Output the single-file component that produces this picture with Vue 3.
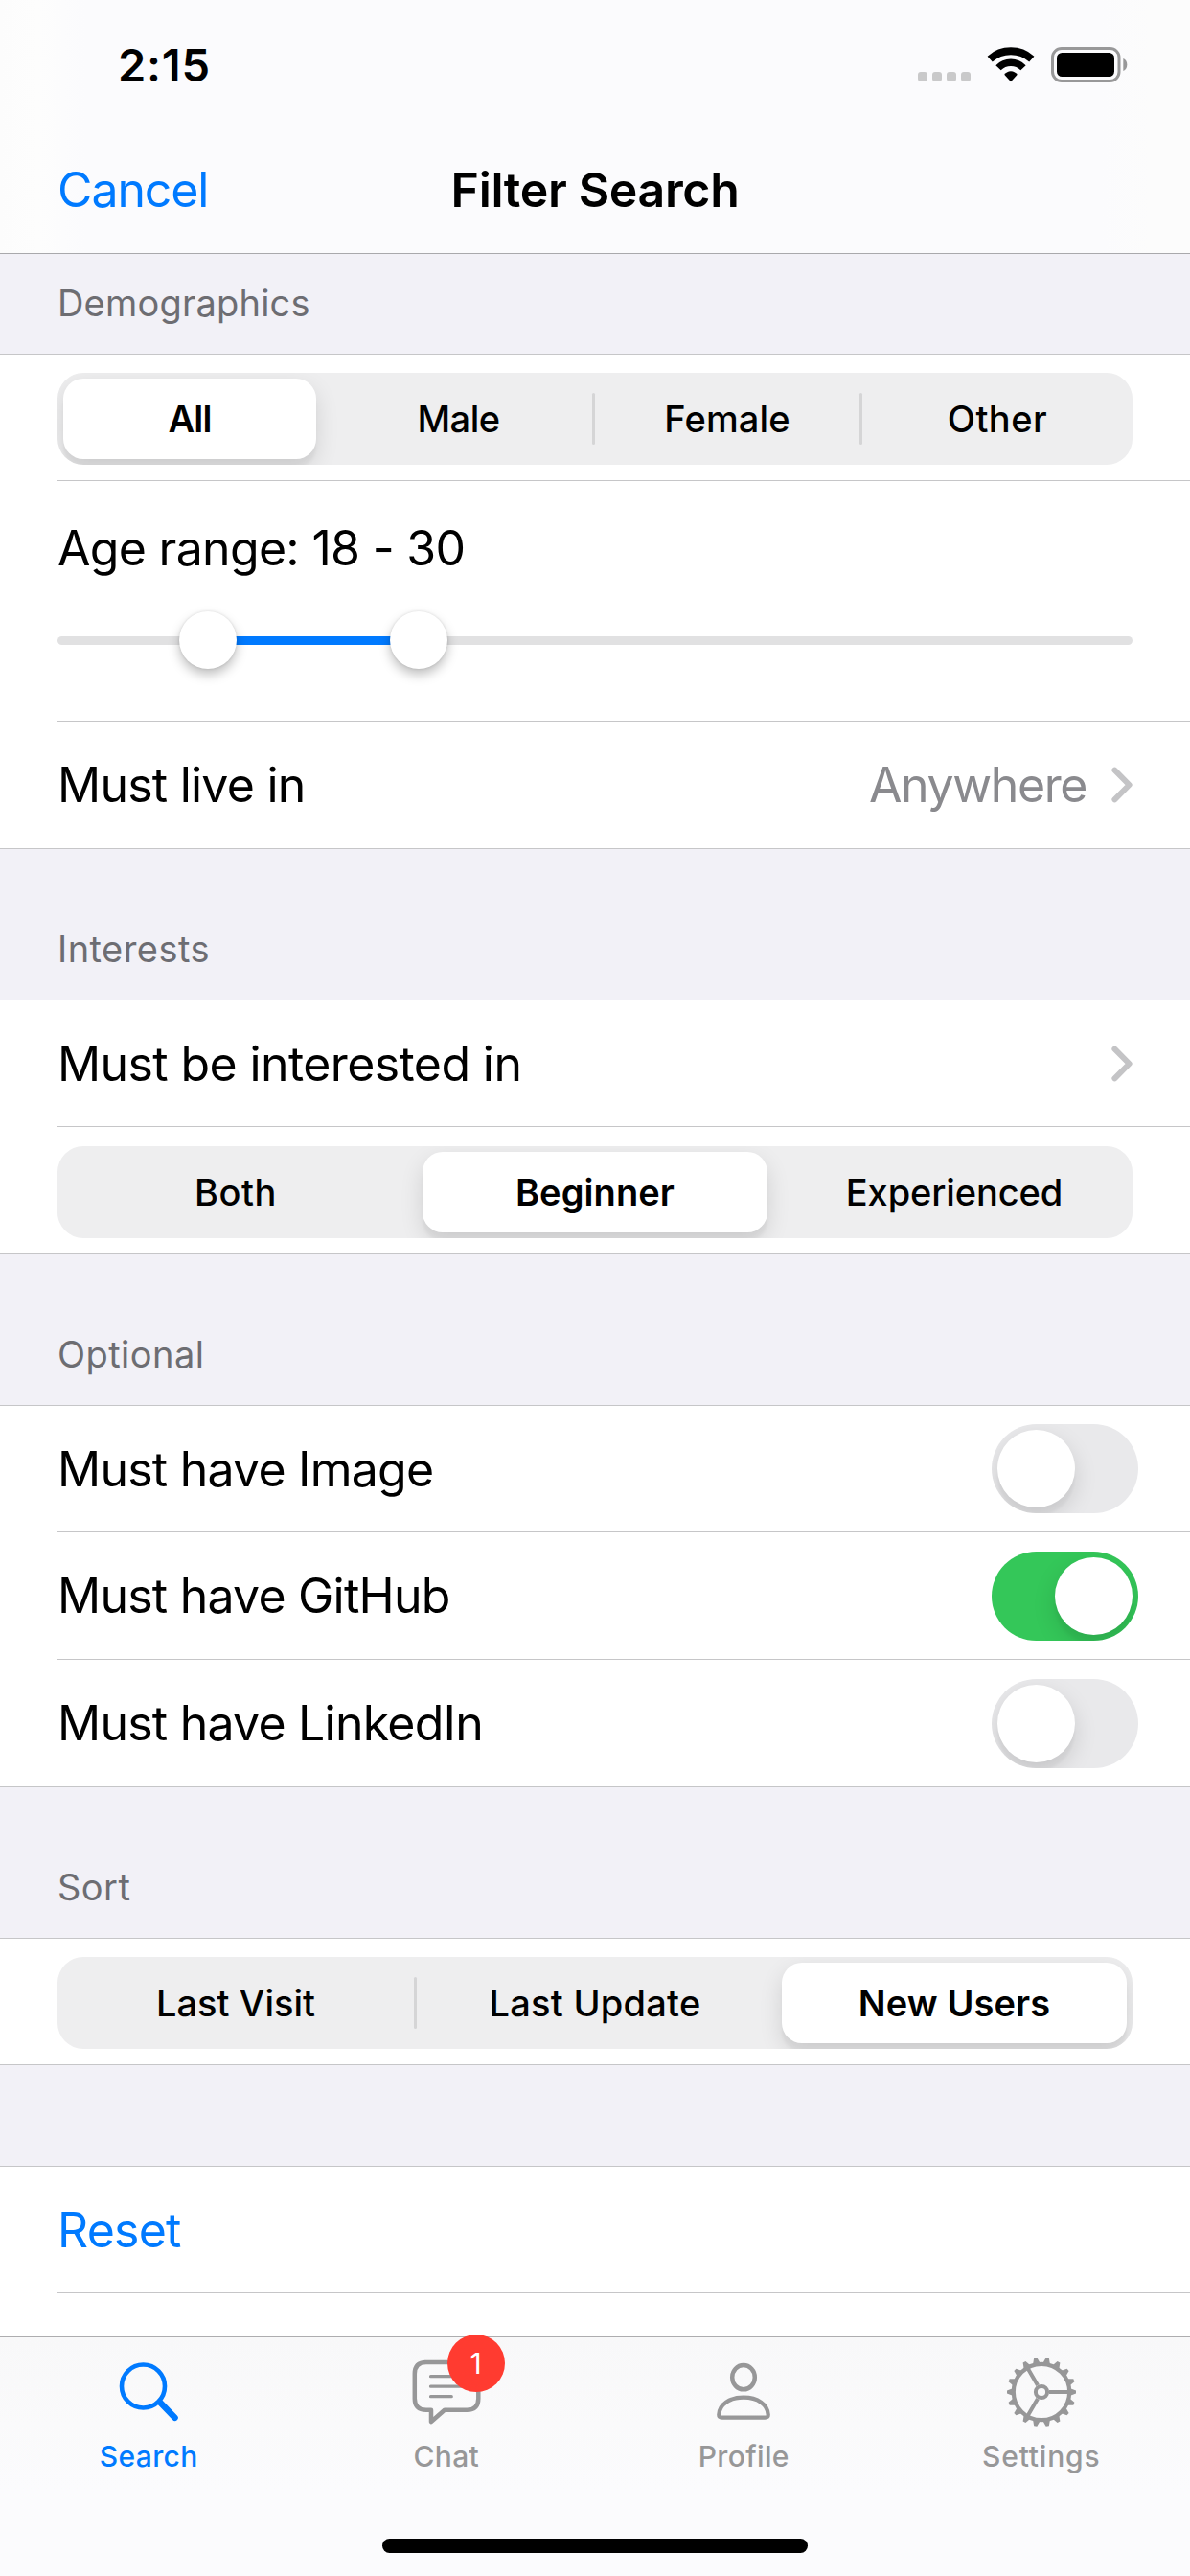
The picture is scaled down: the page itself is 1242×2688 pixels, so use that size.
<script setup>
import { ref } from 'vue'

const gender = ref({
  options: [
    { label: 'All', width: 276, tracking: -0.8 },
    { label: 'Male', width: 279, tracking: -0.5 },
    { label: 'Female', width: 276, tracking: 0.15 },
    { label: 'Other', width: 282, tracking: 0.5 },
  ],
  selected: 0,
})
const level = ref({
  options: [
    { label: 'Both', width: 372, tracking: 0.6 },
    { label: 'Beginner', width: 372, tracking: 0.1 },
    { label: 'Experienced', width: 372, tracking: -0.1 },
  ],
  selected: 1,
})
const sort = ref({
  options: [
    { label: 'Last Visit', width: 372 },
    { label: 'Last Update', width: 372, tracking: 0.25 },
    { label: 'New Users', width: 372, tracking: 0.1 },
  ],
  selected: 2,
})
const toggles = ref([
  { label: 'Must have Image', on: false, height: 132 },
  { label: 'Must have GitHub', on: true, height: 133 },
  { label: 'Must have LinkedIn', on: false, height: 133 },
])

// A divider is only drawn between two options that are both unselected.
const hasDivider = (control, i) => i > 0 && control.selected !== i && control.selected !== i - 1

const teeth = Array.from({ length: 18 }, (_, i) => i * 20)
</script>

<template>
  <div class="screen">
    <header class="top">
      <div class="status">
        <span class="time">2:15</span>
        <div class="indicators">
          <span class="dots"><i v-for="n in 4" :key="n"></i></span>
          <svg class="wifi" width="50" height="37" viewBox="0 0 50 37">
            <g fill="none" stroke="#000">
              <path d="M3.200 12.600A32.700 32.700 0 0 1 46.800 12.600" stroke-width="7.800" />
              <path d="M12 21.800A18 18 0 0 1 38 21.800" stroke-width="7.400" />
            </g>
            <path d="M25 36.300L18.200 28.800Q21 25.200 25 25.200T31.800 28.800Z" />
          </svg>
          <svg class="battery" width="81" height="37" viewBox="0 0 81 37">
            <rect x="1.500" y="1.500" width="69.500" height="34" rx="9.500" fill="none" stroke="#989899" stroke-width="3" />
            <rect x="6" y="6" width="60" height="25" rx="5.500" />
            <path d="M75.300 12q4 1.800 4 6.500t-4 6.500z" fill="#989899" />
          </svg>
        </div>
      </div>
      <nav class="nav">
        <a class="cancel">Cancel</a>
        <h1>Filter Search</h1>
      </nav>
    </header>

    <main>
      <h2 class="section first">Demographics</h2>
      <div class="row control h132">
        <div class="segmented">
          <template v-for="(o, i) in gender.options" :key="o.label">
            <span v-if="i" class="gap" :class="{ line: hasDivider(gender, i) }"></span>
            <span class="seg" :class="{ on: i === gender.selected }" :style="{ width: o.width + 'px', letterSpacing: (o.tracking || 0) + 'px' }"><span>{{ o.label }}</span></span>
          </template>
        </div>
      </div>
      <div class="row age">
        <span class="label">Age range: 18 - 30</span>
        <div class="slider">
          <div class="track"></div>
          <div class="range"></div>
          <i class="thumb low"></i>
          <i class="thumb high"></i>
        </div>
      </div>
      <div class="row last h133">
        <span class="label">Must live in</span>
        <span class="value">Anywhere</span>
        <svg class="chevron" width="22" height="38" viewBox="0 0 22 38"><path d="M3.400 3.700L18.600 19L3.400 34.300" /></svg>
      </div>

      <h2 class="section">Interests</h2>
      <div class="row h132">
        <span class="label interested">Must be interested in</span>
        <svg class="chevron" width="22" height="38" viewBox="0 0 22 38"><path d="M3.400 3.700L18.600 19L3.400 34.300" /></svg>
      </div>
      <div class="row control last h133">
        <div class="segmented">
          <template v-for="(o, i) in level.options" :key="o.label">
            <span v-if="i" class="gap" :class="{ line: hasDivider(level, i) }"></span>
            <span class="seg" :class="{ on: i === level.selected }" :style="{ width: o.width + 'px', letterSpacing: (o.tracking || 0) + 'px' }"><span>{{ o.label }}</span></span>
          </template>
        </div>
      </div>

      <h2 class="section">Optional</h2>
      <div
        v-for="(t, i) in toggles"
        :key="t.label"
        class="row toggle"
        :class="['h' + t.height, { last: i === toggles.length - 1 }]"
      >
        <span class="label">{{ t.label }}</span>
        <span class="switch" :class="{ on: t.on }"><i></i></span>
      </div>

      <h2 class="section">Sort</h2>
      <div class="row control last h132">
        <div class="segmented">
          <template v-for="(o, i) in sort.options" :key="o.label">
            <span v-if="i" class="gap" :class="{ line: hasDivider(sort, i) }"></span>
            <span class="seg" :class="{ on: i === sort.selected }" :style="{ width: o.width + 'px', letterSpacing: (o.tracking || 0) + 'px' }"><span>{{ o.label }}</span></span>
          </template>
        </div>
      </div>

      <div class="spacer"></div>
      <div class="row h132">
        <a class="label link">Reset</a>
      </div>
    </main>

    <footer class="tabbar">
      <div class="tabs">
        <a class="tab active">
          <svg width="80" height="80" viewBox="0 0 80 80" fill="none" stroke="currentColor">
            <circle cx="34.500" cy="34" r="22.500" stroke-width="4.600" />
            <path d="M51.800 50.500L67.500 66.800" stroke-width="6.600" stroke-linecap="round" />
          </svg>
          <span>Search</span>
        </a>
        <a class="tab">
          <svg width="80" height="80" viewBox="0 0 80 80" fill="none" stroke="currentColor" stroke-linejoin="round" stroke-linecap="round">
            <path d="M17.300 9H61.300Q73.300 9 73.300 21V46.700Q73.300 58.700 61.300 58.700H38L24 71V58.700H18.800Q6.800 58.700 6.800 46.700V21Q6.800 9 18.800 9Z" stroke-width="4.500" />
            <path d="M23.500 23.700H56M23.500 34.200H56M23.500 44.700H45.300" stroke-width="3.200" />
          </svg>
          <b class="badge">1</b>
          <span>Chat</span>
        </a>
        <a class="tab">
          <svg width="80" height="80" viewBox="0 0 80 80" fill="none" stroke="currentColor">
            <ellipse cx="40" cy="24.700" rx="11.800" ry="12.600" stroke-width="4.500" />
            <path d="M17.600 66.700C15 66.700 14.200 65.600 14.300 63.500C14.800 53 25 45.700 40 45.700S65.200 53 65.700 63.500C65.800 65.600 65 66.700 62.400 66.700Z" stroke-width="4.300" />
          </svg>
          <span>Profile</span>
        </a>
        <a class="tab">
          <svg width="80" height="80" viewBox="0 0 80 80" fill="none" stroke="currentColor">
            <circle cx="40" cy="40" r="29.200" stroke-width="4.200" />
            <circle cx="40" cy="40" r="6.100" stroke-width="4" />
            <path d="M48 40H69M36 46.900L25.500 65.100M36 33.100L25.500 14.900" stroke-width="4" />
            <path
              v-for="a in teeth"
              :key="a"
              d="M69.500 36L76 38.400V41.600L69.500 44Z"
              :transform="`rotate(${a} 40 40)`"
              fill="currentColor"
              stroke="none"
            />
          </svg>
          <span class="settings">Settings</span>
        </a>
      </div>
      <div class="home"></div>
    </footer>
  </div>
</template>

<style>
body {
  margin: 0;
}
</style>

<style scoped>
* {
  box-sizing: border-box;
}
.screen {
  width: 1242px;
  height: 2688px;
  overflow: hidden;
  display: flex;
  flex-direction: column;
  background: #fff;
  color: #000;
  font-family: Inter, "Liberation Sans", sans-serif;
}
h1,
h2 {
  margin: 0;
}

.top {
  height: 265px;
  flex: none;
  border-bottom: 1px solid #a9a9ac;
  background: linear-gradient(90deg, #fcfcfc 0, #fdfdfd 40px, #fbfbfd 90px, #fbfbfd 1150px, #fcfcfc 1200px);
}
.status {
  height: 132px;
  padding: 38px 64px 0 123px;
  display: flex;
  justify-content: space-between;
  align-items: flex-start;
}
.time {
  font-size: 47px;
  line-height: 60px;
  font-weight: 600;
  letter-spacing: 0.8px;
}
.indicators {
  display: flex;
  align-items: flex-end;
  padding-top: 11px;
}
.dots {
  display: flex;
  gap: 5px;
  padding-bottom: 1px;
  margin-right: 17px;
}
.dots i {
  width: 10px;
  height: 10px;
  border-radius: 3px;
  background: #c9c9ca;
}
.wifi {
  margin-right: 17px;
}
.nav {
  height: 132px;
  padding: 0 60px;
  display: grid;
  grid-template-columns: 1fr auto 1fr;
  align-items: center;
}
.cancel {
  font-size: 50px;
  line-height: 132px;
  letter-spacing: -1.1px;
  color: #007aff;
}
h1 {
  font-size: 50px;
  line-height: 132px;
  font-weight: 600;
  letter-spacing: -0.34px;
}

.section {
  height: 158px;
  padding: 92px 60px 0;
  border-bottom: 1px solid #c6c6c8;
  background: #f2f1f7;
  color: #6d6d72;
  font-size: 38px;
  line-height: 24px;
  font-weight: 400;
  letter-spacing: 0.45px;
}
.section.first {
  height: 105px;
  padding-top: 39px;
  letter-spacing: 0.2px;
}
.spacer {
  height: 106px;
  background: #f2f1f7;
  border-bottom: 1px solid #c6c6c8;
}

.row {
  display: flex;
  align-items: center;
  margin-left: 60px;
  padding-right: 60px;
  border-bottom: 1px solid #c6c6c8;
}
.row.last {
  margin-left: 0;
  padding-left: 60px;
}
.h132 {
  height: 132px;
}
.h133 {
  height: 133px;
}
.label {
  flex: 1;
  font-size: 50px;
  line-height: 60px;
  letter-spacing: -0.77px;
}
.interested {
  letter-spacing: -0.6px;
}
.link {
  color: #007aff;
}
.value {
  margin-right: 26px;
  font-size: 50px;
  line-height: 60px;
  letter-spacing: -1.4px;
  color: #8a8a8e;
}
.chevron {
  fill: none;
  stroke: #c4c4c6;
  stroke-width: 6;
  stroke-linecap: round;
  stroke-linejoin: round;
}

.control {
  align-items: flex-end;
  padding-bottom: 16px;
}
.segmented {
  width: 1122px;
  height: 96px;
  flex: none;
  display: flex;
  overflow: hidden;
  border-radius: 27px;
  background: #eeeeef;
}
.seg {
  flex: none;
  height: 96px;
  padding: 6px;
  font-size: 38px;
  line-height: 84px;
  font-weight: 500;
  text-align: center;
}
.seg > span {
  display: block;
}
.seg.on > span {
  font-weight: 600;
  border-radius: 21px;
  background: #fff;
  box-shadow: 0 9px 24px rgba(0, 0, 0, 0.12), 0 9px 3px rgba(0, 0, 0, 0.04);
}
.gap {
  flex: none;
  width: 3px;
  height: 54px;
  margin-top: 21px;
  border-radius: 1.5px;
}
.gap.line {
  background: #d5d5d6;
}

.age {
  height: 251px;
  display: block;
  padding-top: 40px;
}
.age .label {
  display: block;
  letter-spacing: -0.7px;
}
.slider {
  position: relative;
  height: 60px;
  margin-top: 36px;
  display: flex;
  align-items: center;
}
.track {
  width: 100%;
  height: 9px;
  border-radius: 4.5px;
  background: #e1e1e2;
}
.range {
  position: absolute;
  left: 157px;
  top: 26px;
  width: 220px;
  height: 9px;
  background: #007aff;
}
.thumb {
  position: absolute;
  top: 0;
  width: 60px;
  height: 60px;
  border-radius: 50%;
  background: #fff;
  box-shadow: 0 6px 12px rgba(0, 0, 0, 0.25), 0 0 3px rgba(0, 0, 0, 0.12);
}
.low {
  left: 127px;
}
.high {
  left: 347px;
}

.toggle {
  padding-right: 54px;
}
.switch {
  width: 153px;
  height: 93px;
  padding: 6px;
  display: flex;
  overflow: hidden;
  border-radius: 46.5px;
  background: #e9e9eb;
}
.switch.on {
  justify-content: flex-end;
  background: #34c759;
}
.switch i {
  width: 81px;
  height: 81px;
  border-radius: 50%;
  background: #fff;
  box-shadow: 0 9px 24px rgba(0, 0, 0, 0.13), 0 9px 3px rgba(0, 0, 0, 0.03);
}

.tabbar {
  height: 250px;
  flex: none;
  margin-top: auto;
  border-top: 1px solid #adadaf;
  background: linear-gradient(#f8f8f9, #fafafb 90px, #fbfbfd 160px);
}
.tabs {
  display: grid;
  grid-template-columns: repeat(4, 1fr);
  height: 210px;
}
.tab {
  position: relative;
  display: flex;
  flex-direction: column;
  align-items: center;
  padding-top: 17px;
  color: #979798;
}
.tab.active {
  color: #007aff;
}
.tab span {
  margin-top: 9px;
  font-size: 30px;
  line-height: 36px;
  font-weight: 500;
  letter-spacing: 0.35px;
}
.tab .settings {
  letter-spacing: 0.8px;
}
.badge {
  position: absolute;
  left: 156px;
  top: -3px;
  width: 60px;
  height: 60px;
  border-radius: 50%;
  background: #ff3b30;
  color: #fff;
  font-size: 30px;
  font-weight: 400;
  line-height: 60px;
  text-align: center;
}
.home {
  width: 444px;
  height: 15px;
  margin: 0 auto;
  border-radius: 7.5px;
  background: #000;
}
</style>
